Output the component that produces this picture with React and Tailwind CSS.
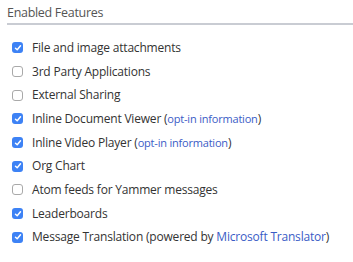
import React from "react";

const items = [
  { checked: true, label: "File and image attachments" },
  { checked: false, label: "3rd Party Applications" },
  { checked: false, label: "External Sharing" },
  { checked: true, label: "Inline Document Viewer", link: "opt-in information" },
  { checked: true, label: "Inline Video Player", link: "opt-in information" },
  { checked: true, label: "Org Chart" },
  { checked: false, label: "Atom feeds for Yammer messages" },
  { checked: true, label: "Leaderboards" },
  { checked: true, label: "Message Translation", pre: "powered by ", link: "Microsoft Translator" },
];

function Box({ checked }) {
  if (checked) {
    return (
      <span className="flex h-[11px] w-[11px] shrink-0 items-center justify-center rounded-[3px] bg-[#3d82f5]">
        <svg width="8" height="8" viewBox="0 0 8 8" fill="none">
          <path d="M1.5 4.2 L3.2 5.8 L6.5 1.8" stroke="white" strokeWidth="1.5" strokeLinecap="round" strokeLinejoin="round" />
        </svg>
      </span>
    );
  }
  return <span className="h-[11px] w-[11px] shrink-0 rounded-[3px] border border-[#a9a9a9] bg-white" />;
}

export default function App() {
  return (
    <div className="h-[262px] w-[353px] bg-white pl-[7px] pt-[5px]" style={{ fontFamily: '"Open Sans", sans-serif' }}>
      <div className="border-b-2 border-[#c9ccd3] pb-[2px] text-[12.5px] leading-[16px] tracking-[-0.3px] text-[#555]">Enabled Features</div>
      <ul className="mt-[11px] flex flex-col pl-[5px]">
        {items.map((it, i) => (
          <li key={i} className="flex h-[23.7px] items-center gap-[9px] text-[12px] tracking-[-0.2px] text-[#333]">
            <Box checked={it.checked} />
            <span className="whitespace-nowrap">
              {it.label}
              {it.link && (
                <>
                  {" ("}
                  {it.pre}
                  <span className={it.pre ? "text-[#3a5cc6]" : "text-[11px] text-[#3a5cc6]"}>{it.link}</span>
                  {")"}
                </>
              )}
            </span>
          </li>
        ))}
      </ul>
    </div>
  );
}
